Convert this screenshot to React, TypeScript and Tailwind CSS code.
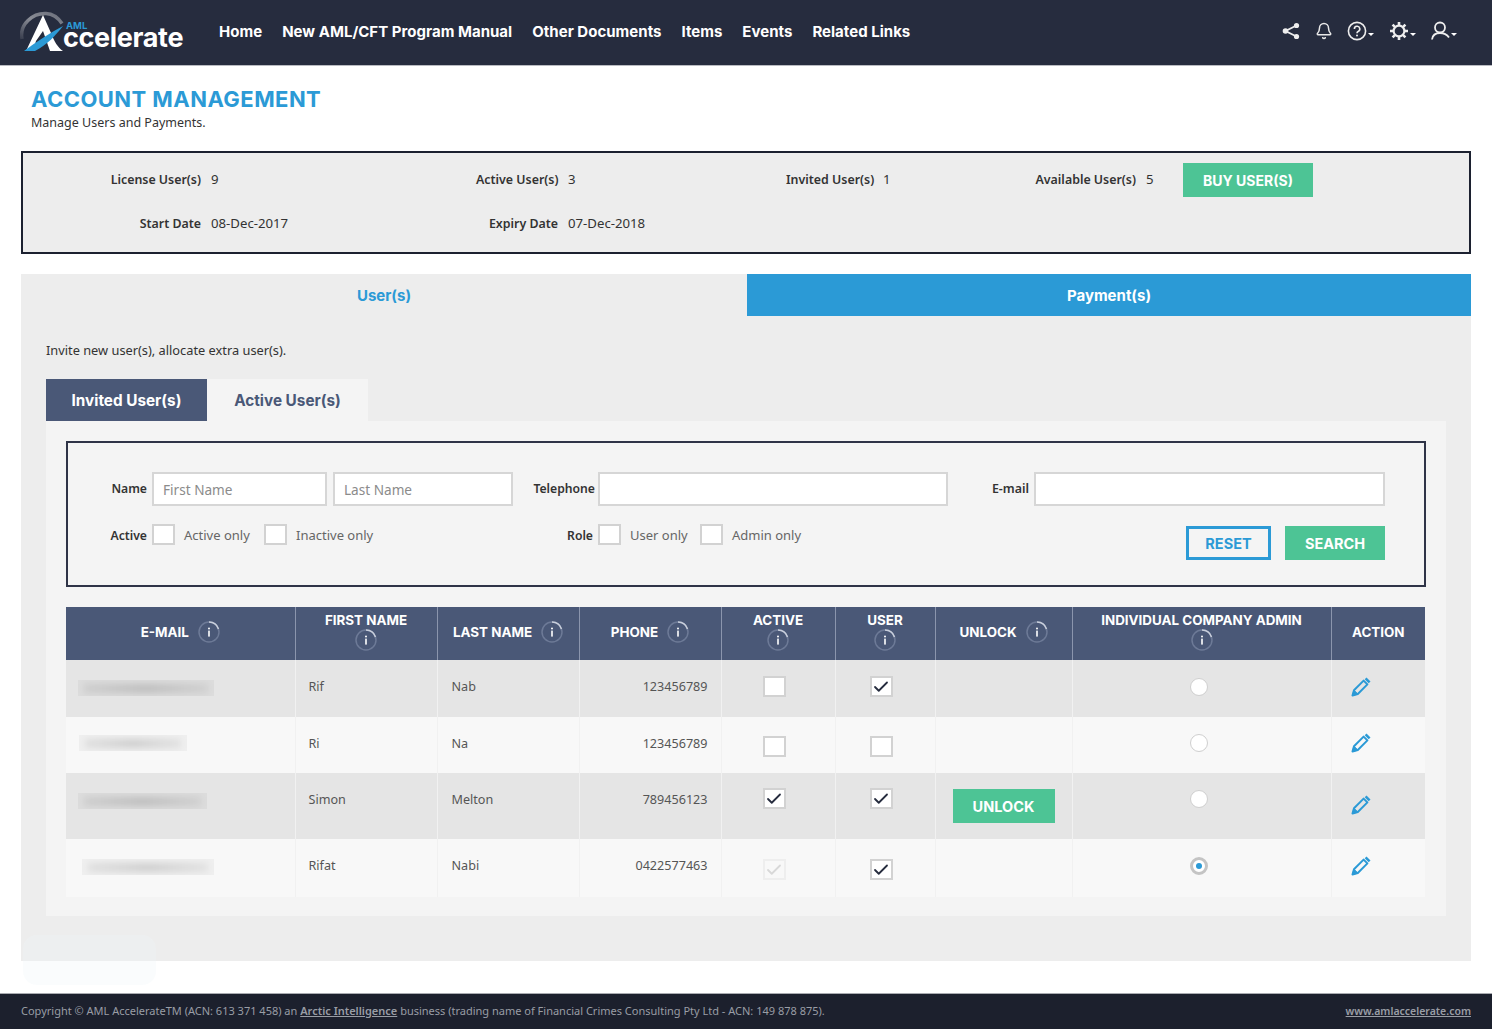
import React from "react";
import { Bell, Check } from "lucide-react";

const head = "font-['Inter',sans-serif] font-bold";

function Info() {
  return (
    <svg width="22" height="22" viewBox="0 0 22 22" className="shrink-0">
      <circle cx="11" cy="11" r="10" fill="none" stroke="#6d7a97" strokeWidth="1.5" />
      <path d="M11 1a10 10 0 0 1 9.5 7" fill="none" stroke="#c9cfdc" strokeWidth="1.5" />
      <circle cx="11" cy="7.5" r="1" fill="#fff" />
      <rect x="10.2" y="9.6" width="1.6" height="6" fill="#fff" />
    </svg>
  );
}

function PencilIcon() {
  return (
    <svg width="20" height="20" viewBox="0 0 20 20" fill="none" stroke="#2b9ad6">
      <path d="M1.5 18.5 3 13.2 12.6 3.6l3.8 3.8L6.8 17z" strokeWidth="2" strokeLinejoin="round" />
      <path d="M14.6 1.4l4 4" strokeWidth="2.6" />
      <path d="M1.5 18.5 3 13.2 6.8 17z" fill="#2b9ad6" strokeWidth="1" />
    </svg>
  );
}

function Caret() {
  return <span className="inline-block self-end mb-[5px] ml-[1px] w-0 h-0 border-x-[3px] border-x-transparent border-t-[3px] border-t-white" />;
}

function Cb({ checked, faded }: { checked?: boolean; faded?: boolean }) {
  return (
    <span className={`flex items-center justify-center w-[23px] h-[21px] border-2 ${faded ? "border-[#eeeeee] bg-[#f8f8f8]" : "border-[#d2d2d2] bg-white"}`}>
      {checked && <Check size={18} strokeWidth={2.4} className={faded ? "text-[#d8d8d8]" : "text-[#262c3e]"} />}
    </span>
  );
}

function Radio({ on }: { on?: boolean }) {
  return (
    <span className={`flex items-center justify-center w-[18px] h-[18px] rounded-full bg-white ${on ? "border-[3px] border-[#c4c4c4]" : "border border-[#cfcfcf]"}`}>
      {on && <span className="w-[6px] h-[6px] rounded-full bg-[#2b9ad6]" />}
    </span>
  );
}

function Blur({ w, ml, mt }: { w: string; ml: string; mt: string }) {
  return (
    <div className={`${w} ${ml} ${mt} h-[16px] bg-black/[0.035] overflow-hidden`}>
      <div className="h-[9px] mt-[4px] mx-[6px] bg-gradient-to-r from-black/[0.06] via-black/[0.13] to-black/[0.05] blur-[3px]" />
    </div>
  );
}

const Field = ({ w, ph }: { w: string; ph?: string }) => (
  <input readOnly placeholder={ph} className={`${w} h-[34px] border-2 border-[#d6d6d6] bg-white px-[9px] text-[13.6px] placeholder:text-[#8b8b8b] outline-none`} />
);

const Hd = ({ t, stack, info = true }: { t: string; stack?: boolean; info?: boolean }) => (
  <th className={`border-x border-[#8b95ad] p-0 align-middle text-center first:border-l-0 last:border-r-0 ${head} text-[13.4px] text-white`}>
    <div className={`flex items-center justify-center ${stack ? "flex-col -translate-y-[3px]" : "gap-[9px] -mt-[4px]"}`}>
      <span className="leading-[18px]">{t}</span>
      {info && <Info />}
    </div>
  </th>
);

const rows = [
  { cls: "bg-[#e5e5e5] h-[57px]", blur: <Blur w="w-[136px]" ml="ml-[12px]" mt="mt-[20px]" />, f: "Rif", l: "Nab", p: "123456789", a: false, u: true, cbT: "pt-[16px]", unlock: false, rT: "pt-[18px]", pT: "pt-[17px]", on: false, fade: false },
  { cls: "bg-[#f8f8f8] h-[56px]", blur: <Blur w="w-[108px]" ml="ml-[13px]" mt="mt-[18px]" />, f: "Ri", l: "Na", p: "123456789", a: false, u: false, cbT: "pt-[19px]", unlock: false, rT: "pt-[17px]", pT: "pt-[16px]", on: false, fade: false },
  { cls: "bg-[#e5e5e5] h-[66px]", blur: <Blur w="w-[129px]" ml="ml-[12px]" mt="mt-[20px]" />, f: "Simon", l: "Melton", p: "789456123", a: true, u: true, cbT: "pt-[15px]", unlock: true, rT: "pt-[17px]", pT: "pt-[22px]", on: false, fade: false },
  { cls: "bg-[#f8f8f8] h-[58px]", blur: <Blur w="w-[132px]" ml="ml-[16px]" mt="mt-[20px]" />, f: "Rifat", l: "Nabi", p: "0422577463", a: true, u: true, cbT: "pt-[20px]", unlock: false, rT: "pt-[18px]", pT: "pt-[17px]", on: true, fade: true },
];

const infoLabel = "whitespace-nowrap text-right text-[12.4px] font-semibold";
const infoVal = "pl-[10px] text-[13.2px]";

export default function App() {
  const td = "border-x border-[#f1f1f1] p-0 align-top first:border-l-0 last:border-r-0";
  return (
    <div className="relative min-h-[1029px] bg-white font-['Noto_Sans',sans-serif] text-[12.8px] text-[#333]">
      <header className="flex h-[66px] items-center border-b border-[#b9bbc1] bg-[#262c3e] pl-[20px] pr-[35px]">
        <div className="-mt-[1px] flex w-[199px] items-end">
          <svg width="46" height="42" viewBox="20 8 46 42" className="shrink-0">
            <defs>
              <linearGradient id="arc" x1="0" y1="1" x2="1" y2="0">
                <stop offset="0" stopColor="#3a3f4f" />
                <stop offset="0.5" stopColor="#8a8d96" />
                <stop offset="1" stopColor="#6a6e7a" />
              </linearGradient>
            </defs>
            <path d="M22 36C19 21 33 10 46 10.500c7 .3 12 4 16 10" fill="none" stroke="url(#arc)" strokeWidth="3.500" />
            <path d="M26 48 43 12l8 18c3 8 7 15 12 18H50l-7-20-7 10-3 10z" fill="#fff" />
            <path d="M24 48c12-9 26-18 39-25-7 9-16 19-28 25z" fill="#2b9ad6" />
          </svg>
          <div className="relative -ml-[3px] mb-[6px]">
            <span className={`absolute -top-[7px] left-[3px] text-[9.5px] leading-[7px] text-[#2b9ad6] ${head}`}>AML</span>
            <span className={`block ${head} text-[27px] leading-[18px] tracking-[-0.35px] text-white`}>ccelerate</span>
          </div>
        </div>
        <nav className={`-mt-[1px] flex gap-[20px] ${head} text-[15px] tracking-[0.02px] text-white`}>
          <span>Home</span><span>New AML/CFT Program Manual</span><span>Other Documents</span><span>Items</span><span>Events</span><span>Related Links</span>
        </nav>
        <div className="-mt-[3px] ml-auto flex items-center gap-[15px] text-[#e8e8e8]">
          <svg width="18" height="18" viewBox="0 0 18 18"><path d="M14.5 3.5 3.5 9l11 5.5" fill="none" stroke="#eee" strokeWidth="1.8" /><circle cx="14.5" cy="3.5" r="2.6" fill="#eee" /><circle cx="3.5" cy="9" r="2.8" fill="#eee" /><circle cx="14.5" cy="14.5" r="2.6" fill="#eee" /></svg>
          <Bell size={18} strokeWidth={2} />
          <span className="-ml-[1px] flex">
            <svg width="20" height="20" viewBox="0 0 20 20"><circle cx="10" cy="10" r="8.6" fill="none" stroke="#eee" strokeWidth="1.6" /><path d="M7.4 8a2.7 2.7 0 1 1 3.7 2.5c-.8.4-1.1.9-1.1 1.8" fill="none" stroke="#eee" strokeWidth="1.6" /><circle cx="10" cy="14.6" r="1" fill="#eee" /></svg>
            <Caret />
          </span>
          <span className="flex">
            <svg width="20" height="20" viewBox="0 0 20 20" stroke="#eee" fill="none">
              <circle cx="10" cy="10" r="5.4" strokeWidth="2.2" />
              <path d="M10 1v3.5M10 15.5V19M1 10h3.5M15.5 10H19M3.6 3.6l2.5 2.5M13.9 13.9l2.5 2.5M3.6 16.4l2.5-2.5M13.9 6.1l2.5-2.5" strokeWidth="2.6" />
            </svg>
            <Caret />
          </span>
          <span className="flex">
            <svg width="19" height="20" viewBox="0 0 19 20"><circle cx="9" cy="6.5" r="5" fill="none" stroke="#eee" strokeWidth="1.8" /><path d="M1 18.5c.5-4 3.5-6.5 8-6.5s7 1.6 9 4.5" fill="none" stroke="#eee" strokeWidth="1.8" /></svg>
            <Caret />
          </span>
        </div>
      </header>

      <main className="px-[21px]">
        <div className="pl-[10px] pt-[19px]">
          <h1 className={`${head} text-[22px] leading-[28px] tracking-[0.45px] text-[#2b9ad6]`}>ACCOUNT MANAGEMENT</h1>
          <p className="pt-[1px] -mb-[1px] text-[12.5px] leading-[18px] text-[#333]">Manage Users and Payments.</p>
        </div>

        <section className="mt-[20px] h-[103px] border-2 border-[#1c2130] bg-[#ededed] pt-[10px]">
          <div className="grid grid-cols-[178px_275px_82px_228px_87px_162px_101px_47px_130px] grid-rows-[34px_52px] items-center">
            <b className={infoLabel}>License User(s)</b>
            <span className={infoVal}>9</span>
            <b className={infoLabel}>Active User(s)</b>
            <span className={infoVal}>3</span>
            <b className={infoLabel}>Invited User(s)</b>
            <span className={infoVal}>1</span>
            <b className={infoLabel}>Available User(s)</b>
            <span className={infoVal}>5</span>
            <button className={`h-[34px] bg-[#4dc495] ${head} text-[14px] text-white`}>BUY USER(S)</button>
            <b className={`${infoLabel} mt-[2px]`}>Start Date</b>
            <span className={`${infoVal} mt-[2px]`}>08-Dec-2017</span>
            <b className={`${infoLabel} mt-[2px]`}>Expiry Date</b>
            <span className={`${infoVal} mt-[2px]`}>07-Dec-2018</span>
          </div>
        </section>

        <section className="relative mt-[20px] h-[687px] bg-[#ededed]">
          <div className={`grid grid-cols-[726px_1fr] h-[42px] ${head} text-[15px]`}>
            <div className="flex items-center justify-center pt-[2px] text-[#2b9ad6]">User(s)</div>
            <div className="flex items-center justify-center bg-[#2b9ad6] pt-[2px] text-white">Payment(s)</div>
          </div>
          <div className="px-[25px]">
            <p className="pt-[24px] leading-[20px]">Invite new user(s), allocate extra user(s).</p>
            <div className={`mt-[19px] flex h-[42px] ${head} text-[15.3px]`}>
              <div className="flex w-[161px] items-center justify-center bg-[#4a5877] pt-[2px] text-white">Invited User(s)</div>
              <div className="flex w-[161px] items-center justify-center bg-[#f4f4f4] pt-[2px] text-[#4a5877]">Active User(s)</div>
            </div>
            <div className="bg-[#f4f4f4] p-[20px] pb-[19px]">
              <div className="h-[146px] border-2 border-[#2f3447] pt-[29px] pr-[39px]">
                <div className="flex items-center">
                  <b className="w-[79px] pt-[1px] text-right text-[12.2px] font-semibold">Name</b>
                  <span className="ml-[5px]"><Field w="w-[175px]" ph="First Name" /></span>
                  <span className="ml-[6px]"><Field w="w-[180px]" ph="Last Name" /></span>
                  <b className="ml-[20px] w-[62px] pt-[1px] text-right text-[12.2px] font-semibold">Telephone</b>
                  <span className="ml-[3px]"><Field w="w-[350px]" /></span>
                  <b className="w-[81px] pt-[1px] text-right text-[12.4px] font-semibold">E-mail</b>
                  <span className="ml-[5px]"><Field w="w-[351px]" /></span>
                </div>
                <div className="mt-[18px] flex items-start text-[13px] text-[#666]">
                  <b className="w-[79px] text-right text-[12.2px] font-semibold text-[#333] leading-[23px]">Active</b>
                  <span className="ml-[5px]"><Cb /></span>
                  <span className="ml-[9px] w-[80px] leading-[23px]">Active only</span>
                  <Cb />
                  <span className="ml-[9px] w-[270px] leading-[23px]">Inactive only</span>
                  <b className="w-[27px] text-right text-[12.2px] font-semibold text-[#333] leading-[23px]">Role</b>
                  <span className="ml-[5px]"><Cb /></span>
                  <span className="ml-[9px] w-[70px] leading-[23px]">User only</span>
                  <Cb />
                  <span className="ml-[9px] leading-[23px]">Admin only</span>
                  <div className={`ml-auto mt-[2px] flex gap-[14px] ${head} text-[14.5px]`}>
                    <button className="h-[34px] w-[85px] border-[3px] border-[#2b9ad6] pt-[1px] text-[#2b9ad6]">RESET</button>
                    <button className="h-[34px] w-[100px] bg-[#4dc495] pt-[1px] text-white">SEARCH</button>
                  </div>
                </div>
              </div>

              <table className="mt-[20px] w-[1359px] table-fixed border-collapse">
                <colgroup>
                  <col className="w-[229px]" /><col className="w-[142px]" /><col className="w-[142px]" /><col className="w-[142px]" /><col className="w-[114px]" /><col className="w-[100px]" /><col className="w-[137px]" /><col className="w-[259px]" /><col className="w-[94px]" />
                </colgroup>
                <thead>
                  <tr className="h-[53px] bg-[#4a5877]">
                    <Hd t="E-MAIL" /><Hd t="FIRST NAME" stack /><Hd t="LAST NAME" /><Hd t="PHONE" /><Hd t="ACTIVE" stack /><Hd t="USER" stack /><Hd t="UNLOCK" /><Hd t="INDIVIDUAL COMPANY ADMIN" stack /><Hd t="ACTION" info={false} />
                  </tr>
                </thead>
                <tbody className="text-[12.6px] text-[#555]">
                  {rows.map((r) => (
                    <tr key={r.f} className={r.cls}>
                      <td className={td}>{r.blur}</td>
                      <td className={`${td} pl-[13px] pt-[17px] leading-[20px]`}>{r.f}</td>
                      <td className={`${td} pl-[14px] pt-[17px] leading-[20px]`}>{r.l}</td>
                      <td className={`${td} pr-[13px] pt-[17px] text-right leading-[20px]`}>{r.p}</td>
                      <td className={`${td} pl-[41px] ${r.cbT}`}><Cb checked={r.a} faded={r.fade} /></td>
                      <td className={`${td} pl-[34px] ${r.cbT}`}><Cb checked={r.u} /></td>
                      <td className={`${td} pl-[17px] pt-[16px]`}>
                        {r.unlock && <button className={`h-[34px] w-[102px] bg-[#4dc495] pt-[1px] ${head} text-[14.5px] text-white`}>UNLOCK</button>}
                      </td>
                      <td className={`${td} pl-[117px] ${r.rT}`}><Radio on={r.on} /></td>
                      <td className={`${td} pl-[19px] ${r.pT}`}><PencilIcon /></td>
                    </tr>
                  ))}
                </tbody>
              </table>
            </div>
          </div>
          <div className="absolute left-[2px] top-[661px] h-[50px] w-[133px] rounded-[14px] bg-[#f0f4fa]/30" />
        </section>
      </main>

      <footer className="mt-[32px] flex h-[36px] items-center justify-between border-t border-[#a9abb0] bg-[#1c202d] px-[21px] text-[11px] text-[#999da5]">
        <span>Copyright © AML AccelerateTM (ACN: 613 371 458) an <b className="font-semibold underline">Arctic Intelligence</b> business (trading name of Financial Crimes Consulting Pty Ltd - ACN: 149 878 875).</span>
        <b className="text-[10.5px] font-semibold underline">www.amlaccelerate.com</b>
      </footer>
    </div>
  );
}
